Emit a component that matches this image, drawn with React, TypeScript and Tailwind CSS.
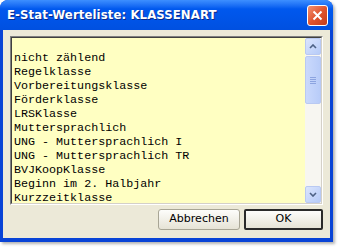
import React from "react";

const items = [
  "",
  "nicht zählend",
  "Regelklasse",
  "Vorbereitungsklasse",
  "Förderklasse",
  "LRSKlasse",
  "Muttersprachlich",
  "UNG - Muttersprachlich I",
  "UNG - Muttersprachlich TR",
  "BVJKoopKlasse",
  "Beginn im 2. Halbjahr",
  "Kurzzeitklasse",
];

const ArrowBtn = ({ down }: { down?: boolean }) => (
  <div className="h-[17px] w-[16px] rounded-[2px] border border-[#b9c9f2] bg-gradient-to-br from-[#dbe5fd] to-[#b6cbf8] flex items-center justify-center">
    <svg width="8" height="5" viewBox="0 0 8 5">
      <path
        d={down ? "M1 1 L4 4 L7 1" : "M1 4 L4 1 L7 4"}
        stroke="#4d6185"
        strokeWidth="1.6"
        fill="none"
      />
    </svg>
  </div>
);

export default function App() {
  return (
    <div className="w-[340px] h-[248px] bg-white">
      <div className="w-[333px] h-[242px] flex flex-col rounded-t-[8px] bg-[#0843d6] shadow-[2px_2px_3px_rgba(0,0,0,0.3)] overflow-hidden">
        <div className="h-[30px] shrink-0 flex items-center justify-between pl-[7px] pr-[5px] bg-gradient-to-b from-[#3d8fff] via-[#0058ee] via-30% to-[#0050e0]">
          <span
            className="text-white font-bold text-[13px] tracking-[0.1px]"
            style={{ fontFamily: '"DejaVu Sans Condensed", "DejaVu Sans", sans-serif', textShadow: "1px 1px 0 #0a2a8a" }}
          >
            E-Stat-Werteliste: KLASSENART
          </span>
          <div className="w-[21px] h-[21px] rounded-[3px] border border-white bg-gradient-to-br from-[#f09070] via-[#e0542e] to-[#c43c1a] flex items-center justify-center">
            <svg width="11" height="11" viewBox="0 0 11 11">
              <path d="M1.5 1.5 L9.5 9.5 M9.5 1.5 L1.5 9.5" stroke="white" strokeWidth="2" />
            </svg>
          </div>
        </div>
        <div className="flex-1 mx-[3px] mb-[4px] bg-[#ece9d8] flex flex-col">
          <div className="mt-[6px] mx-[7px] h-[169px] border-t border-l border-[#808080] border-b border-r border-b-white border-r-white">
            <div className="h-full border-t border-l border-[#404040] border-b border-r border-b-[#d4d0c8] border-r-[#d4d0c8] bg-[#ffffc2] flex">
              <div
                className="flex-1 -mt-[1px] pl-[2px] text-black text-[11.7px] leading-[14px] overflow-hidden"
                style={{ fontFamily: '"Liberation Mono", monospace' }}
              >
                {items.map((t, i) => (
                  <div key={i} className="h-[14px] whitespace-pre">
                    {t}
                  </div>
                ))}
              </div>
              <div className="w-[16px] flex flex-col bg-[#f7f6f1]">
                <ArrowBtn />
                <div className="mt-[1px] h-[48px] w-[16px] rounded-[2px] border border-[#b9c9f2] bg-gradient-to-r from-[#cad9fc] to-[#b8ccf8] flex flex-col items-center justify-center gap-[1px]">
                  <div className="w-[6px] h-[1px] bg-[#8ca4e0]" />
                  <div className="w-[6px] h-[1px] bg-[#8ca4e0]" />
                  <div className="w-[6px] h-[1px] bg-[#8ca4e0]" />
                  <div className="w-[6px] h-[1px] bg-[#8ca4e0]" />
                </div>
                <div className="flex-1" />
                <ArrowBtn down />
              </div>
            </div>
          </div>
          <div className="mt-[4px] mr-[7px] flex justify-end gap-[4px]">
            <button
              className="w-[82px] h-[21px] rounded-[3px] border border-[#a8a595] bg-gradient-to-b from-[#fdfdfb] to-[#e6e3d6] text-[11px] text-black"
              style={{ fontFamily: '"DejaVu Sans", sans-serif' }}
            >
              Abbrechen
            </button>
            <button
              className="w-[79px] h-[21px] rounded-[2px] border-2 border-[#2a2a2a] bg-gradient-to-b from-[#fdfdfb] to-[#e6e3d6] text-[11px] text-black"
              style={{ fontFamily: '"DejaVu Sans", sans-serif' }}
            >
              OK
            </button>
          </div>
        </div>
      </div>
    </div>
  );
}
